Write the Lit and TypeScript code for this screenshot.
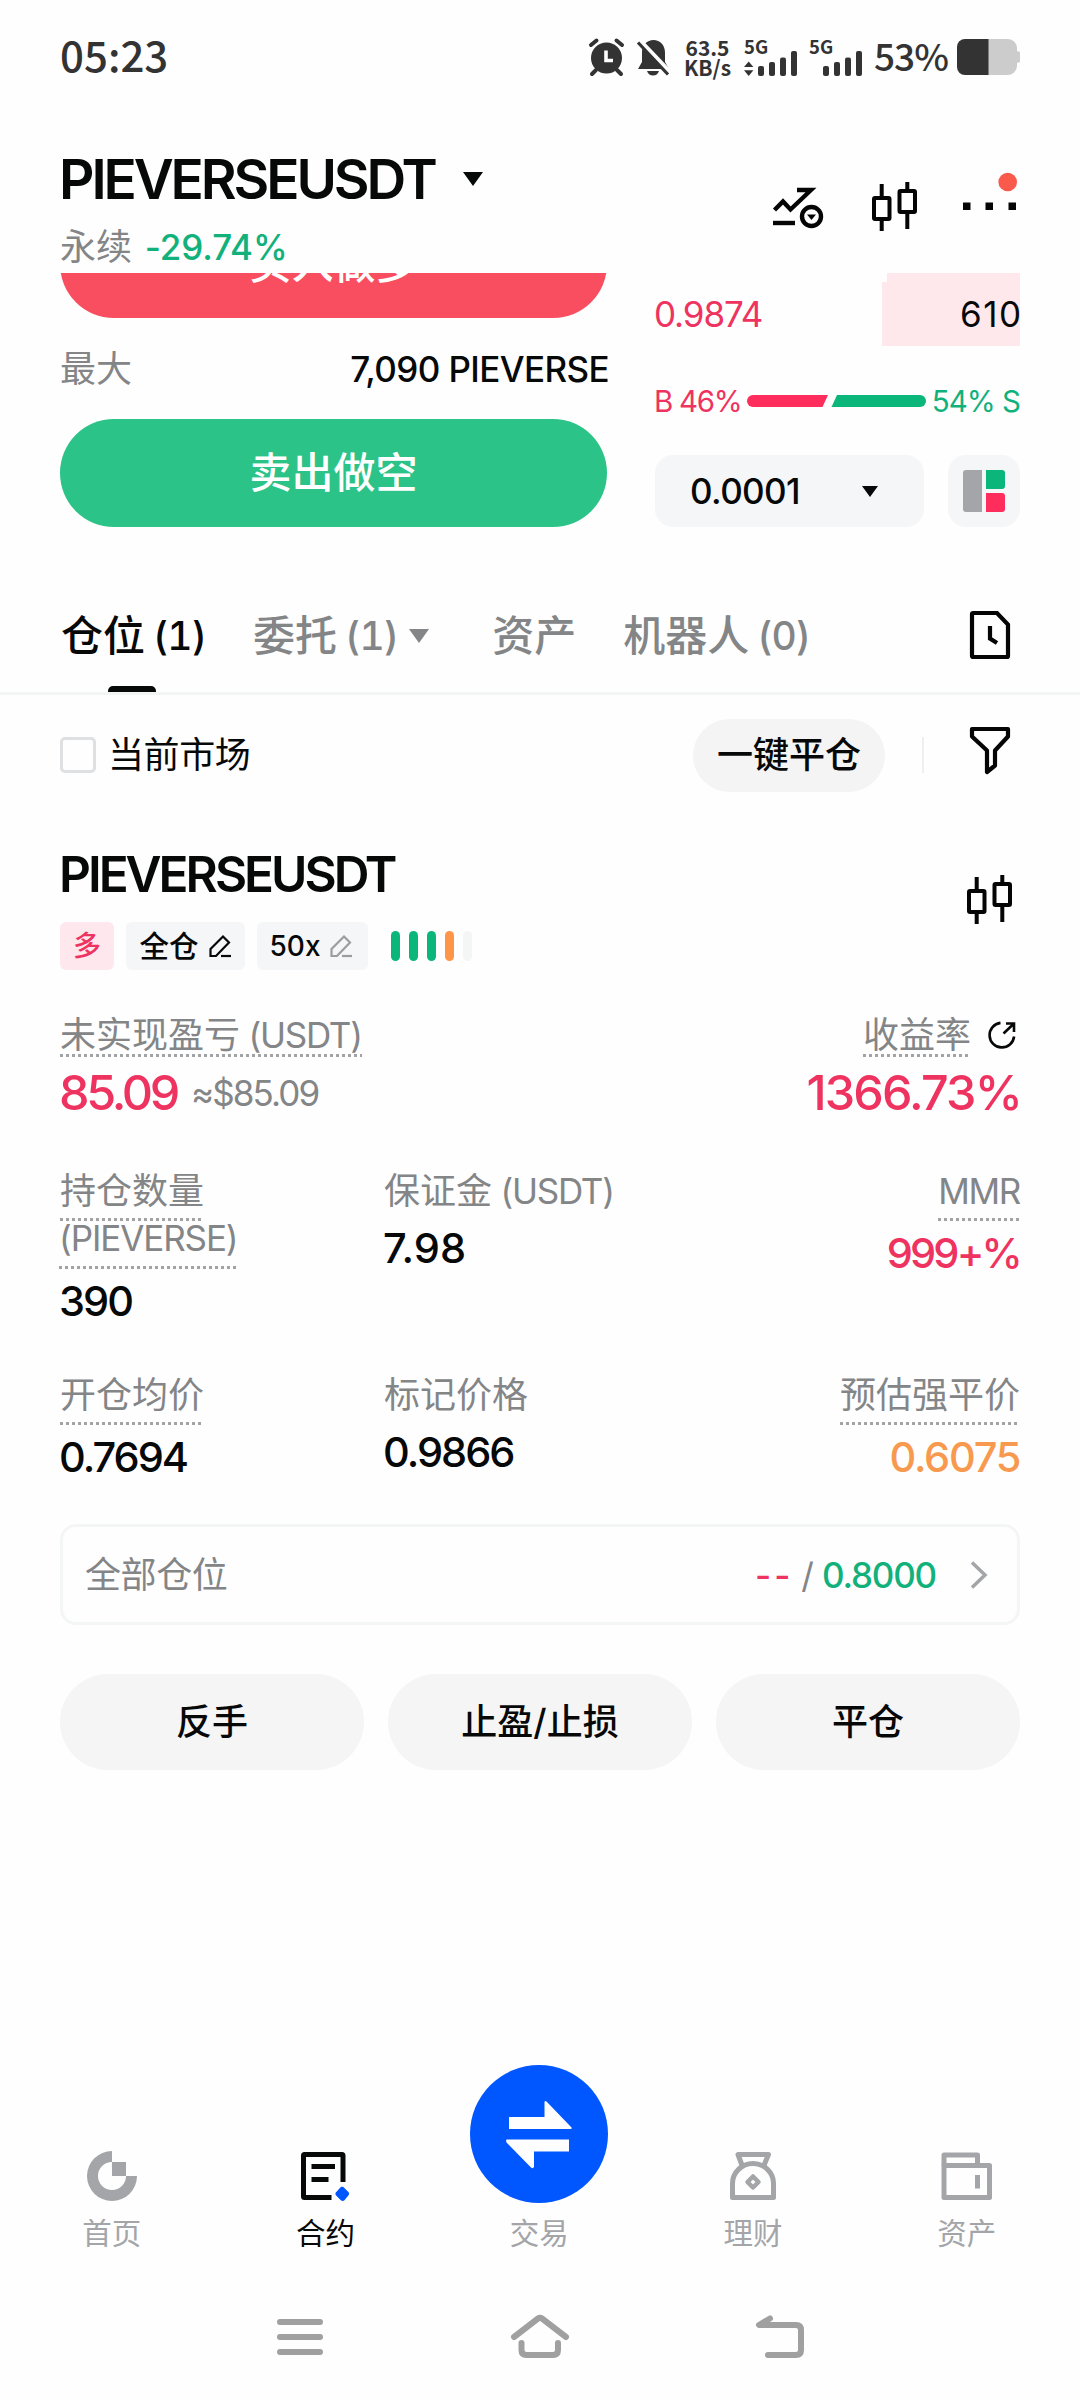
import { LitElement, html, css, svg } from "lit";
import { customElement } from "lit/decorators.js";

const candles = html`<svg class="ic" width="46" height="50" viewBox="0 0 46 50" fill="none" stroke="#050505" stroke-width="4">
  <rect x="2" y="16" width="15.5" height="21" rx="1"/><path d="M9.7 2v14M9.7 37v12"/>
  <rect x="27.5" y="9" width="15.5" height="21" rx="1"/><path d="M35.3 0v9M35.3 30v17"/>
</svg>`;

const pencil = (color: string) => html`<svg class="ic" width="24" height="24" viewBox="0 0 24 24" fill="none" stroke=${color} stroke-width="2.2">
  <path d="M2.5 15 15 2.5 21 8.5 8 22H2.5z"/><path d="M13 22h10"/>
</svg>`;

const signal = (arrows: boolean) => html`<svg class="ic sig" width="54" height="37" viewBox="0 0 54 37" fill="#333">
  ${arrows ? svg`<path d="M4.7 22.5 9.4 28H0zM4.7 37 0 31.2h9.4z"/>` : ""}
  <rect x="14" y="27" width="6" height="10" rx="2"/><rect x="25" y="23" width="6" height="14" rx="2"/>
  <rect x="36" y="18.5" width="6" height="18.5" rx="2"/><rect x="47" y="12" width="6" height="25" rx="2"/>
</svg>`;

@customElement("app-root")
export class AppRoot extends LitElement {
  static styles = css`
    :host { display: block; }
    * { box-sizing: border-box; }
    .page {
      width: 1080px; height: 2400px; background: #fefefe; color: #070808;
      display: flex; flex-direction: column; overflow: hidden;
      font-family: Inter, "Noto Sans CJK SC", sans-serif; font-size: 36px; line-height: 60px;
      font-weight: 400; white-space: nowrap;
    }
    .ic { display: block; flex: none; overflow: visible; }
    .row { display: flex; align-items: center; }
    .between { justify-content: space-between; }
    .grow { flex: 1; }
    .gray { color: #838587; }
    .pink { color: #ef3360; }
    .green { color: #12b17c; }
    .lat { font-size: 35px; }
    .unit { letter-spacing: -1.3px; }

    .status { height: 114px; padding: 0 60px; color: #333; font-family: "Noto Sans CJK SC", sans-serif; font-weight: 500; flex: none; }
    .clock { font-size: 42px; margin-bottom: 6px; }
    .alarm { margin-right: 12px; }
    .bell { margin-right: 15px; }
    .speed { width: 45px; margin-right: 14px; font-size: 21px; line-height: 20.5px; font-weight: 700; display: flex; flex-direction: column; align-items: center; }
    .net { position: relative; width: 65px; height: 37px; }
    .net span { position: absolute; left: 0; top: -3px; font-size: 18.5px; line-height: 20px; font-weight: 700; }
    .pct { font-size: 37px; width: 76px; margin: 0 7px 5px 0; letter-spacing: -1px; }

    .header { height: 159px; padding: 32px 60px 0; display: flex; justify-content: space-between; flex: none; }
    .title { font-size: 55px; font-weight: 600; line-height: 66px; letter-spacing: -3.1px; margin-left: -1px; }
    .caret { margin-left: 28px; }
    .sub { margin-top: 15px; line-height: 40px; gap: 13px; letter-spacing: -0.1px; }
    .sub .green { font-weight: 500; }
    .tools { height: 50px; margin-top: 36px; }
    .tools .ic:nth-child(1) { margin-right: 48px; }
    .tools .ic:nth-child(2) { margin-right: 45px; }

    .order { height: 254px; flex: none; overflow: hidden; padding: 0 60px; display: flex; justify-content: space-between; }
    .side { width: 547px; margin-top: -63px; }
    .cta { height: 108px; border-radius: 54px; color: #fff; font-size: 42px; font-weight: 500; display: flex; align-items: center; justify-content: center; }
    .buy { background: #f84e60; }
    .sell { background: #2cc388; }
    .max { height: 101px; }
    .max .lat { font-weight: 500; letter-spacing: -0.6px; margin-right: -2px; }
    .book { width: 365px; }
    .ask { height: 64px; display: grid; grid-template-columns: 1fr 138px; align-items: center; }
    .ask.prev { height: 9px; grid-template-columns: 1fr 133px; }
    .price { letter-spacing: -1.1px; margin-left: -1px; }
    .depth { height: 100%; background: #ffe8ec; display: flex; align-items: center; justify-content: flex-end; letter-spacing: 1.5px; }
    .depth span { margin-right: -2.5px; }
    .ratio { height: 109px; font-size: 29.5px; justify-content: space-between; }
    .rb { letter-spacing: -1.3px; margin-left: -1px; }
    .rs { letter-spacing: -1px; }
    .pick { height: 72px; gap: 24px; }
    .step { width: 269px; height: 72px; border-radius: 18px; background: #f5f6f7; padding: 0 46px 0 35px; font-weight: 500; letter-spacing: -0.6px; }
    .mode { width: 72px; height: 72px; border-radius: 18px; background: #f5f6f7; display: flex; align-items: center; justify-content: center; }

    .tabs { height: 168px; border-bottom: 3px solid #f3f4f4; padding: 58px 70px 0 61px; display: flex; flex: none; color: #838587; font-size: 42px; font-weight: 500; gap: 47px; }
    .tab { display: flex; flex-direction: column; align-items: center; line-height: 101px; }
    .tab .row { height: 101px; gap: 8px; }
    .tab .ic { margin-left: 3px; }
    .tab i { width: 48px; height: 7px; border-radius: 5px 5px 0 0; }
    .tab.on { color: #070808; }
    .tab.on i { background: #070808; margin-left: -3px; }
    .tab .n { font-size: 39px; font-variant-numeric: tabular-nums; letter-spacing: -0.9px; }
    .t2 { padding-right: 16px; }
    .history { margin-top: 26px; }

    .filter { height: 120px; flex: none; padding: 0 70px 0 60px; }
    .market { letter-spacing: -0.4px; }
    .box { width: 36px; height: 36px; border: 3px solid #dfe0e1; border-radius: 5px; margin-right: 12px; }
    .pill { width: 192px; height: 73px; border-radius: 37px; background: #f4f4f4; font-weight: 500; text-align: center; line-height: 73px; }
    .rule { width: 2px; height: 36px; background: #efefef; margin: 0 46px 0 37px; }
    .funnel { margin-bottom: 8px; }

    .pos { padding: 29px 60px 0; flex: none; }
    .name { font-size: 49.5px; font-weight: 600; letter-spacing: -3px; line-height: 60px; margin-left: -1px; }
    .head { align-items: flex-start; }
    .head .ic { margin: 31px 7px 0 0; }
    .tags { margin-top: -3px; height: 48px; }
    .tag { height: 48px; border-radius: 6px; background: #f5f6f7; font-size: 30px; font-weight: 500; display: flex; align-items: center; justify-content: center; margin-right: 12px; gap: 9px; }
    .long { width: 54px; background: #ffe8ed; color: #ef3360; font-size: 28px; }
    .cross { width: 119px; font-size: 29.5px; }
    .lev { width: 111px; font-size: 28px; margin-right: 23px; padding-right: 2px; }
    .risk { gap: 9px; }
    .risk b { width: 9px; height: 30px; border-radius: 5px; background: #0bb67b; }
    .risk b.warn { background: #ff9549; }
    .risk b.off { background: #f4f5f5; }

    .dots { padding-bottom: 3px; background: repeating-linear-gradient(90deg, #a2a3a4 0 3px, transparent 3px 6px) left bottom / 100% 3px no-repeat; }
    .pnl { margin-top: 45px; align-items: flex-start; }
    .pnl .dots { display: block; line-height: 40px; padding-bottom: 2px; }
    .pnl .share { margin: 6px 4px 0 17px; }
    .top { align-items: flex-start; }
    .vals { margin-top: 6px; height: 60px; }
    .big { font-size: 48.5px; font-weight: 500; }
    .b1 { letter-spacing: -3.3px; margin-left: -1px; }
    .b2 { letter-spacing: -1.85px; margin-right: -1px; }
    .approx { margin-left: 14px; letter-spacing: -1.9px; }

    .stats { display: grid; grid-template-columns: 324px 1fr auto; margin-top: 43px; }
    .cell { display: flex; flex-direction: column; align-items: flex-start; height: 204px; padding-top: 1px; }
    .cell.last { height: 117px; }
    .cell.r { align-items: flex-end; }
    .cell .l { line-height: 49px; color: #838587; padding-bottom: 5px; }
    .cell .two { line-height: 35px; padding-bottom: 13px; letter-spacing: -1.1px; margin-left: -1px; }
    .cell .l.plain { padding-bottom: 2px; }
    .cell .mmr { letter-spacing: -1.3px; }
    .cell .v { font-size: 41.5px; font-weight: 500; line-height: 60px; letter-spacing: -2px; margin-left: -1px; }
    .cell .v.wide { letter-spacing: 0; }
    .cell .v.pink { letter-spacing: -2.8px; }
    .cell .v.orange { letter-spacing: -1.3px; }
    .cell .dots + .v { margin-top: 2px; }
    .orange { color: #f79a4f; }

    .all { margin-top: 37px; height: 101px; border: 3px solid #f4f5f5; border-radius: 16px; padding: 0 29px 0 22px; }
    .dash { font-weight: 500; letter-spacing: 3px; margin-right: 8px; }
    .tp { font-weight: 500; letter-spacing: -1.2px; margin: 0 34px 0 8px; }
    .acts { display: grid; grid-template-columns: repeat(3, 1fr); gap: 24px; margin-top: 49px; }
    .act { height: 96px; border-radius: 48px; background: #f5f5f5; line-height: 96px; text-align: center; font-weight: 500; }

    .nav { flex: none; display: grid; grid-template-columns: repeat(5, 213.75px); padding-left: 5px; align-items: end; font-size: 29.5px; color: #a3a5a8; margin-top: auto; }
    .item { display: flex; flex-direction: column; align-items: center; line-height: 40px; }
    .item .ic { margin-bottom: 7px; }
    .item .trade { margin-bottom: 10px; }
    .item.on { color: #070808; }
    .sys { flex: none; height: 147px; padding: 21px 275px 0; display: flex; align-items: center; justify-content: space-between; }
  `;

  render() {
    return html`<div class="page">
      <div class="status row">
        <span class="clock">05:23</span><span class="grow"></span>
        <svg class="ic alarm" width="36" height="38" viewBox="0 0 36 38">
          <circle cx="17.5" cy="20" r="15.5" fill="#333"/>
          <path d="M2 7 7.5 2.5M33 7 27.5 2.5M7 32 3 36M28 32l4 4" stroke="#333" stroke-width="4" stroke-linecap="round"/>
          <path d="M17 12.5v10h7" fill="none" stroke="#fff" stroke-width="3.6"/>
        </svg>
        <svg class="ic bell" width="33" height="38" viewBox="0 0 33 38">
          <path d="M5 14.5C5 7 10 2 16.5 2S28 7 28 14.5V24l4 7H1l4-7z" fill="#333"/>
          <path d="M10 33h12c-1 3-3.2 4.5-6 4.5S11 36 10 33z" fill="#333"/>
          <path d="M3.5 3 34 35" stroke="#fefefe" stroke-width="4"/>
          <path d="M1 4.5 31 36.5" stroke="#333" stroke-width="3.2"/>
        </svg>
        <span class="speed"><span>63.5</span><span>KB/s</span></span>
        <span class="net"><span>5G</span>${signal(true)}</span>
        <span class="net"><span>5G</span>${signal(false)}</span>
        <span class="pct">53%</span>
        <svg class="ic" width="63" height="36" viewBox="0 0 63 36">
          <path d="M31 0h20a9 9 0 0 1 9 9v3l3 1v10l-3 1v3a9 9 0 0 1-9 9H31z" fill="#ccc"/>
          <path d="M31.5 0H8a8 8 0 0 0-8 8v20a8 8 0 0 0 8 8h23.5z" fill="#333"/>
        </svg>
      </div>

      <div class="header">
        <div>
          <div class="row"><span class="title">PIEVERSEUSDT</span>
            <svg class="ic caret" width="20" height="14" viewBox="0 0 20 14"><path d="M0 0h20L10 14z" fill="#070808"/></svg></div>
          <div class="sub row"><span class="gray">永续</span><span class="green lat">-29.74%</span></div>
        </div>
        <div class="tools row">
          <svg class="ic" width="51" height="44" viewBox="0 0 51 44" fill="none" stroke="#050505" stroke-width="4.4">
            <path d="M1.5 25 10 16.5 17.5 24.5 38 5H24"/><path d="M0 38h22"/>
            <circle cx="38.5" cy="31.5" r="9.5"/><path d="M34 29.5h9L38.5 35z" fill="#050505" stroke="none"/>
          </svg>
          ${candles}
          <svg class="ic" width="57" height="50" viewBox="0 0 57 50">
            <path d="M0 20.5h7.500V28H0zM22.5 20.5H30V28h-7.500zM45.5 20.5H53V28h-7.500z" fill="#050505"/>
            <circle cx="44.7" cy="0" r="9.300" fill="#fa5a4b"/>
          </svg>
        </div>
      </div>

      <div class="order">
        <div class="side">
          <div class="cta buy">买入做多</div>
          <div class="max row between"><span class="gray">最大</span><span class="lat">7,090 PIEVERSE</span></div>
          <div class="cta sell">卖出做空</div>
        </div>
        <div class="book">
          <div class="ask prev"><span></span><span class="depth"></span></div>
          <div class="ask"><span class="lat pink price">0.9874</span><span class="depth lat"><span>610</span></span></div>
          <div class="ratio row">
            <span class="pink rb">B 46%</span>
            <svg class="ic" width="179" height="12" viewBox="0 0 179 12">
              <path d="M6 0h75l-5.5 12H6A6 6 0 0 1 6 0z" fill="#ff2d5c"/>
              <path d="M90 0h83a6 6 0 0 1 0 12H84.5z" fill="#0bb67b"/>
            </svg>
            <span class="green rs">54% S</span>
          </div>
          <div class="pick row">
            <div class="step row between"><span class="lat">0.0001</span>
              <svg class="ic" width="16" height="11" viewBox="0 0 16 11"><path d="M0 0h16L8 11z" fill="#070808"/></svg></div>
            <div class="mode"><svg class="ic" width="42" height="42" viewBox="0 0 42 42">
              <path d="M3 0h16v42H3a3 3 0 0 1-3-3V3a3 3 0 0 1 3-3z" fill="#a3a5a8"/>
              <path d="M23 0h16a3 3 0 0 1 3 3v13a3 3 0 0 1-3 3H23z" fill="#0bb67b"/>
              <path d="M23 23h16a3 3 0 0 1 3 3v13a3 3 0 0 1-3 3H23z" fill="#ff2d5c"/>
            </svg></div>
          </div>
        </div>
      </div>

      <div class="tabs">
        <div class="tab on"><div class="row"><span>仓位</span><span class="n">(1)</span></div><i></i></div>
        <div class="tab t2"><div class="row"><span>委托</span><span class="n">(1)</span>
          <svg class="ic" width="20" height="14" viewBox="0 0 20 14"><path d="M0 0h20L10 14z" fill="#838587"/></svg></div></div>
        <div class="tab"><div class="row">资产</div></div>
        <div class="tab"><div class="row"><span>机器人</span><span class="n">(0)</span></div></div>
        <span class="grow"></span>
        <svg class="ic history" width="40" height="48" viewBox="0 0 40 48" fill="none" stroke="#050505" stroke-width="4.2">
          <path d="M2 3a1 1 0 0 1 1-1h24L38 13.5V45a1 1 0 0 1-1 1H3a1 1 0 0 1-1-1z"/><path d="M20 15v12.5l7 4.500"/></svg>
      </div>

      <div class="filter row">
        <span class="box"></span><span class="market">当前市场</span><span class="grow"></span>
        <span class="pill">一键平仓</span><span class="rule"></span>
        <svg class="ic" width="40" height="56" viewBox="0 0 40 56" fill="none" stroke="#050505" stroke-width="4.2" stroke-linejoin="round">
          <path d="M2 2h36v7.500L25 23.500V38.500L17 45V23.500L2 9.500z"/></svg>
      </div>

      <div class="pos">
        <div class="row between head">
          <div class="name">PIEVERSEUSDT</div>${candles}
        </div>
        <div class="tags row">
          <span class="tag long">多</span>
          <span class="tag cross">全仓${pencil("#070808")}</span>
          <span class="tag lev"><span>50x</span>${pencil("#9b9da0")}</span>
          <span class="risk row"><b></b><b></b><b></b><b class="warn"></b><b class="off"></b></span>
        </div>

        <div class="pnl row between">
          <span class="dots gray">未实现盈亏<span class="lat unit"> (USDT)</span></span>
          <span class="row top"><span class="dots gray">收益率</span>
            <svg class="ic share" width="28" height="28" viewBox="0 0 28 28" fill="none" stroke="#070808" stroke-width="2.6">
              <path d="M12.5 1.900A12.3 12.3 0 1 0 26.1 15.5"/><path d="M15.5 12.5 25.5 3M18 2.5h8v8.500"/></svg></span>
        </div>
        <div class="vals row">
          <span class="big pink b1">85.09</span><span class="gray lat approx">≈$85.09</span><span class="grow"></span>
          <span class="big pink b2">1366.73%</span>
        </div>

        <div class="stats">
          <div class="cell"><span class="l dots">持仓数量</span><span class="l two dots lat">(PIEVERSE)</span><span class="v">390</span></div>
          <div class="cell"><span class="l plain">保证金<span class="lat unit"> (USDT)</span></span><span class="v wide">7.98</span></div>
          <div class="cell r"><span class="l dots lat mmr">MMR</span><span class="v pink">999+%</span></div>
          <div class="cell last"><span class="l dots">开仓均价</span><span class="v">0.7694</span></div>
          <div class="cell last"><span class="l plain">标记价格</span><span class="v">0.9866</span></div>
          <div class="cell last r"><span class="l dots">预估强平价</span><span class="v orange">0.6075</span></div>
        </div>

        <div class="all row">
          <span class="gray market">全部仓位</span><span class="grow"></span>
          <span class="lat pink dash">--</span><span class="lat gray">/</span><span class="lat green tp">0.8000</span>
          <svg class="ic" width="18" height="28" viewBox="0 0 18 28" fill="none" stroke="#a3a5a8" stroke-width="3.5"><path d="M2 1.500 15 14 2 26.500"/></svg>
        </div>

        <div class="acts">
          <div class="act">反手</div><div class="act">止盈/止损</div><div class="act">平仓</div>
        </div>
      </div>

      <div class="nav">
        <div class="item"><svg class="ic" width="60" height="60" viewBox="0 0 60 60" fill="#a3a5a8">
          <path d="M30 5A25 25 0 1 0 55 30H44A14 14 0 1 1 30 16z"/><path d="M30 16h14v14H30z"/></svg>首页</div>
        <div class="item on"><svg class="ic" width="60" height="60" viewBox="0 0 60 60" fill="none" stroke="#070808" stroke-width="5">
          <path d="M35.5 51.500H8.500a1 1 0 0 1-1-1V9.500a1 1 0 0 1 1-1H46a1 1 0 0 1 1 1V36"/><path d="M15.5 20.500H39M15.500 33.500h17"/>
          <path d="M46.5 42 51.500 47a1 1 0 0 1 0 1.500L47.500 53.500a1 1 0 0 1-1.500 0L41 48.500a1 1 0 0 1 0-1.500L45.500 42z" fill="#0056ff" stroke="#0056ff" stroke-width="2.500" stroke-linejoin="round"/></svg>合约</div>
        <div class="item"><svg class="ic trade" width="138" height="138" viewBox="0 0 138 138">
          <circle cx="69" cy="69" r="69" fill="#0056ff"/>
          <path d="M39 52H74.500V37Q75 35 77 37L101.500 62.500Q102 64 100.500 64H39zM99 74.500V86.500H64V102Q63 104 61 102.500L36.500 77.500Q35.500 74.500 37 74.500z" fill="#fefefe"/></svg>交易</div>
        <div class="item"><svg class="ic" width="60" height="60" viewBox="0 0 60 60" fill="none" stroke="#a3a5a8" stroke-width="5" stroke-linejoin="round">
          <path d="M19.500 20.500 15 8.500H45.500L40.500 20.500"/><path d="M9.500 51.500V37.500a20.500 20 0 0 1 41 0V51.500z"/><path d="M30 30.500 35.500 36 30 41.500 24.500 36z" stroke-width="4.500"/></svg>理财</div>
        <div class="item"><svg class="ic" width="60" height="60" viewBox="0 0 60 60" fill="none" stroke="#a3a5a8" stroke-width="5" stroke-linejoin="round">
          <path d="M7 19.500V9H40.500V19.500"/><path d="M7 19.500H52.500V51.500H7z"/><path d="M40.500 29v13.500"/></svg>资产</div>
      </div>

      <div class="sys">
        <svg class="ic" width="50" height="46" viewBox="0 0 50 46" stroke="#a0a0a0" stroke-width="6" stroke-linecap="round"><path d="M5 8h40M5 23h40M5 38h40"/></svg>
        <svg class="ic" width="60" height="46" viewBox="0 0 60 46" fill="none" stroke="#a0a0a0" stroke-width="6" stroke-linecap="round" stroke-linejoin="round"><path d="M4 23 28 4.500Q30 3 32 4.500L56 23M11.500 29v7q0 5 5 5h26.500q5 0 5-5v-7"/></svg>
        <svg class="ic" width="50" height="46" viewBox="0 0 50 46" fill="none" stroke="#a0a0a0" stroke-width="6" stroke-linecap="round" stroke-linejoin="round"><path d="M15 4.500 4 11H41q5 0 5 5V36q0 5-5 5H13"/></svg>
      </div>
    </div>`;
  }
}
